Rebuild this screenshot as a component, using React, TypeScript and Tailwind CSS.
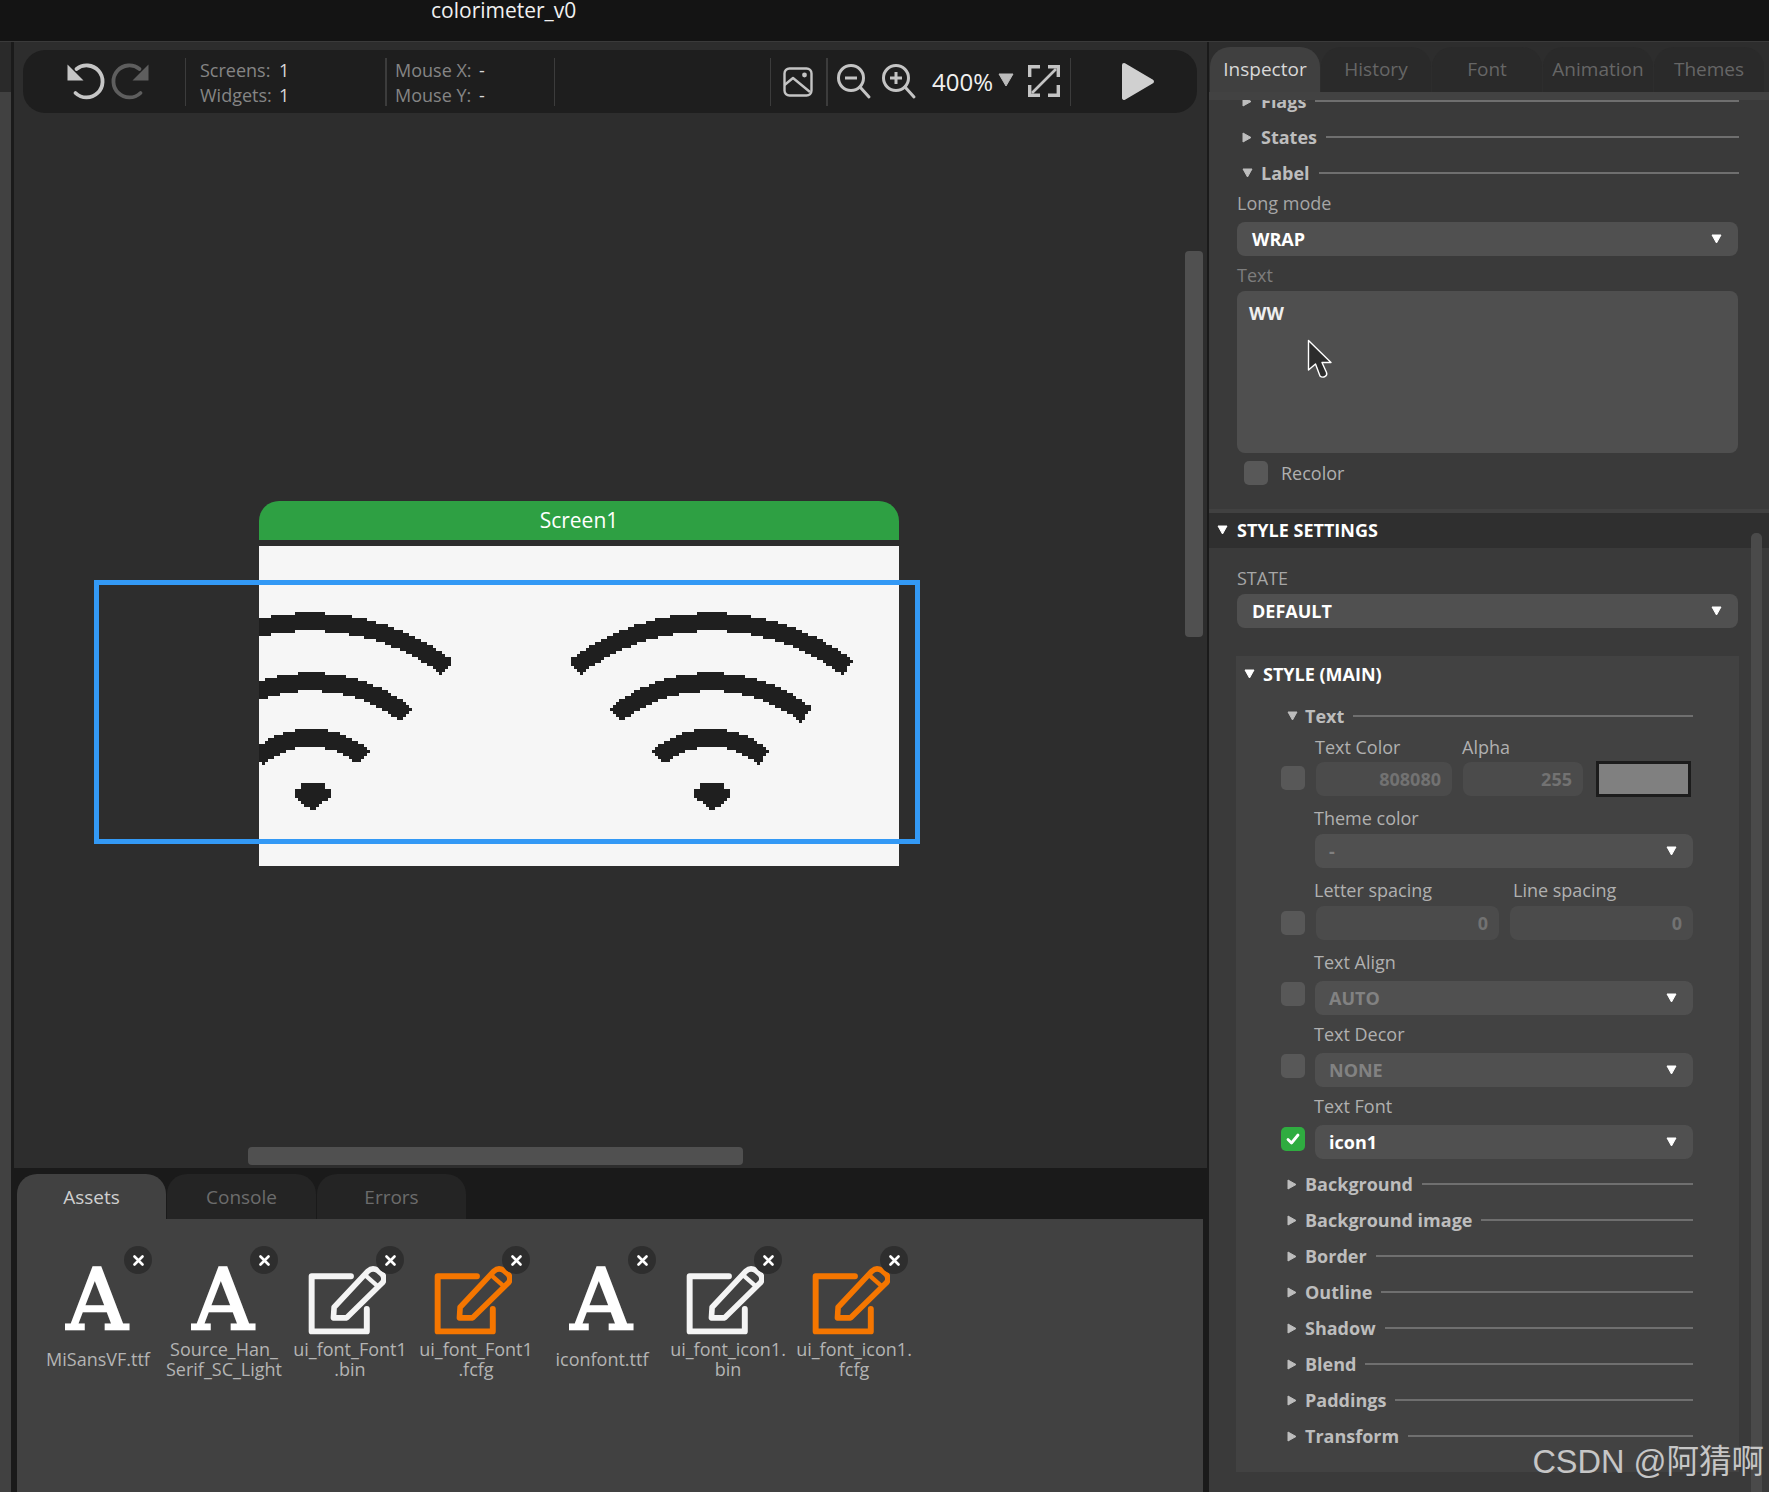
import React from "react";

const arcs = [
  { r: 227, cy: 849, a: 37 },
  { r: 155, cy: 837, a: 38 },
  { r: 81, cy: 819, a: 41 },
];
function inIcon(px: number, py: number, cx: number) {
  const dx = px - cx;
  for (const arc of arcs) {
    const dy = py - arc.cy;
    const d = Math.hypot(dx, dy);
    const ang = (Math.atan2(Math.abs(dx), -dy) * 180) / Math.PI;
    if (Math.abs(d - arc.r) <= 9 && ang <= arc.a) return true;
  }
  const ddx = Math.abs(dx - 1.5);
  if (py >= 784 && py <= 812) {
    let hw = py < 796 ? 18 : (18 * (812 - py)) / 16;
    if (py < 789) hw = 11;
    if (ddx <= hw) return true;
  }
  return false;
}
function wifiPath() {
  const cell = 3;
  let d = "";
  for (let j = 0; j < 107; j++) {
    for (let i = 0; i < 214; i++) {
      const px = 259 + i * cell + cell / 2;
      const py = 546 + j * cell + cell / 2;
      if (inIcon(px, py, 311) || inIcon(px, py, 711)) {
        d += `M${i * cell} ${j * cell}h${cell}v${cell}h-${cell}z`;
      }
    }
  }
  return d;
}
const WIFI = wifiPath();

function TriDown({ color = "#ffffff" }: { color?: string }) {
  return (
    <svg width="11" height="10" viewBox="0 0 11 10" className="shrink-0">
      <path d="M1 1 H10 L5.5 9 Z" fill={color} stroke={color} strokeWidth="1" strokeLinejoin="round" />
    </svg>
  );
}
function TriRight({ color = "#bdbdbd" }: { color?: string }) {
  return (
    <svg width="10" height="11" viewBox="0 0 10 11" className="shrink-0">
      <path d="M1 1 V10 L9 5.5 Z" fill={color} stroke={color} strokeWidth="1" strokeLinejoin="round" />
    </svg>
  );
}

function Row({ label, open, clsTri, clsText }: { label: string; open?: boolean; clsTri: string; clsText: string }) {
  return (
    <div className="flex items-center h-[36px]">
      <div className={clsTri}>{open ? <TriDown color="#bdbdbd" /> : <TriRight />}</div>
      <span className={clsText}>{label}</span>
      <div className="flex-1 h-[2px] bg-[#6f6f6f] ml-[9px]" />
    </div>
  );
}
function InspectorRow({ label, open }: { label: string; open?: boolean }) {
  return (
    <div className="ml-[33px] mr-[30px]">
      <Row label={label} open={open} clsTri="w-[19px]" clsText="text-[18px] font-bold text-[#bdbdbd] leading-[24px]" />
    </div>
  );
}
function StyleRow({ label, open }: { label: string; open?: boolean }) {
  return (
    <div className="ml-[51px] mr-[46px]">
      <Row label={label} open={open} clsTri="w-[18px]" clsText="text-[18px] font-bold text-[#bdbdbd] leading-[24px]" />
    </div>
  );
}

function Select({ value, cls, textCls }: { value: string; cls: string; textCls: string }) {
  return (
    <div className={`flex items-center justify-between h-[34px] rounded-[8px] bg-[#505050] pl-[14px] pr-[16px] ${cls}`}>
      <span className={`text-[18px] font-bold leading-[24px] ${textCls}`}>{value}</span>
      <TriDown />
    </div>
  );
}
function Check({ on, cls }: { on?: boolean; cls: string }) {
  return (
    <div className={`w-[24px] h-[24px] rounded-[5px] shrink-0 flex items-center justify-center ${on ? "bg-[#2fac40]" : "bg-[#585858]"} ${cls}`}>
      {on && (
        <svg width="14" height="12" viewBox="0 0 14 12">
          <path d="M2 6.5 L5.5 10 L12 2" fill="none" stroke="#ffffff" strokeWidth="2.8" strokeLinecap="round" strokeLinejoin="round" />
        </svg>
      )}
    </div>
  );
}
function Num({ value, cls }: { value: string; cls: string }) {
  return (
    <div className={`h-[34px] rounded-[8px] bg-[#4b4b4b] flex items-center justify-end pr-[11px] text-[18px] font-bold text-[#727272] ${cls}`}>
      {value}
    </div>
  );
}
function FLabel({ children, cls = "" }: { children: React.ReactNode; cls?: string }) {
  return <div className={`h-[26px] flex items-center text-[18px] leading-[24px] text-[#b0b0b0] ${cls}`}>{children}</div>;
}

function TopTab({ label, active }: { label: string; active?: boolean }) {
  return (
    <div
      className={`w-[110px] h-[45px] rounded-t-[20px] flex items-center justify-center text-[19px] ${
        active ? "bg-[#404040] text-[#d8d8d8]" : "bg-[#2a2a2a] text-[#666666]"
      }`}
    >
      {label}
    </div>
  );
}
function BottomTab({ label, active }: { label: string; active?: boolean }) {
  return (
    <div
      className={`w-[149px] h-[45px] pt-[1px] rounded-t-[20px] flex items-center justify-center text-[19px] ${
        active ? "bg-[#414141] text-[#cfcfcf]" : "bg-[#242424] text-[#6c6c6c]"
      }`}
    >
      {label}
    </div>
  );
}

function EditIcon({ color }: { color: string }) {
  return (
    <svg width="80" height="71" viewBox="20 62 240 215" className="blur-[0.6px]">
      <path d="M155 96 H36 V263 H203 V195" fill="none" stroke={color} strokeWidth="18" strokeLinejoin="round" strokeLinecap="round" />
      <path
        d="M102 222 L104 190 L207 80 Q220 68 236 78 L250 90 Q260 104 250 116 L142 222 Z"
        fill="none"
        stroke={color}
        strokeWidth="17"
        strokeLinejoin="round"
      />
      <path d="M197 92 L240 130" fill="none" stroke={color} strokeWidth="13" />
    </svg>
  );
}

function Asset({ icon, lines }: { icon: "font" | "white" | "orange"; lines: string[] }) {
  return (
    <div className="relative w-[126px] shrink-0 flex flex-col items-center">
      <div className="absolute left-[89px] top-0 w-[28px] h-[28px] rounded-full bg-[#2e2e2e] flex items-center justify-center z-10">
        <svg width="11" height="11" viewBox="0 0 11 11">
          <path d="M1.5 1.5 L9.5 9.5 M9.5 1.5 L1.5 9.5" stroke="#ffffff" strokeWidth="2.6" strokeLinecap="round" />
        </svg>
      </div>
      <div className="mt-[20px] h-[68px] w-full flex items-center justify-center">
        {icon === "font" ? (
          <span className="-ml-[2px] text-[84px] leading-[68px] font-normal text-white blur-[0.5px] [-webkit-text-stroke:2.5px_#ffffff] [font-family:'DejaVu_Serif',serif]">
            A
          </span>
        ) : (
          <div className="-ml-[8px]">
            <EditIcon color={icon === "white" ? "#f4f4f4" : "#f57600"} />
          </div>
        )}
      </div>
      <div className="mt-[5px] h-[40px] flex flex-col justify-center items-center text-[18px] leading-[20px] text-[#b4b4b4] whitespace-nowrap">
        {lines.map((l) => (
          <div key={l}>{l}</div>
        ))}
      </div>
    </div>
  );
}

function Toolbar() {
  return (
    <div className="ml-[9px] mt-[8px] w-[1174px] h-[63px] rounded-[22px] bg-[#1e1e1e] flex items-center relative z-10">
      <div className="w-[162px] h-[48px] flex items-center pl-[37px]">
        <svg width="100" height="50" viewBox="0 0 100 50">
          <path d="M16.5 12 A16 16 0 1 1 15.5 36" fill="none" stroke="#c6c6c6" strokeWidth="3.8" strokeLinecap="round" />
          <path d="M7.5 7.5 V23.5 H23.5 Z" fill="#c6c6c6" />
          <path d="M79.5 12 A16 16 0 1 0 80.5 36" fill="none" stroke="#5e5e5e" strokeWidth="3.8" strokeLinecap="round" />
          <path d="M88.5 7.5 V23.5 H72.5 Z" fill="#5e5e5e" />
        </svg>
      </div>
      <div className="w-[200px] h-[48px] border-l border-[#3c3c3c] pl-[14px] flex flex-col text-[18px] leading-[25px] text-[#858585]">
        <div className="flex">
          <span className="w-[79px]">Screens:</span>
          <span className="text-[#d8d8d8]">1</span>
        </div>
        <div className="flex">
          <span className="w-[79px]">Widgets:</span>
          <span className="text-[#d8d8d8]">1</span>
        </div>
      </div>
      <div className="w-[169px] h-[48px] border-l-2 border-[#3c3c3c] pl-[8px] flex flex-col text-[18px] leading-[25px] text-[#858585]">
        <div className="flex">
          <span className="w-[84px]">Mouse X:</span>
          <span className="text-[#d8d8d8]">-</span>
        </div>
        <div className="flex">
          <span className="w-[84px]">Mouse Y:</span>
          <span className="text-[#d8d8d8]">-</span>
        </div>
      </div>
      <div className="w-[216px] h-[48px] border-l border-[#3c3c3c]" />
      <div className="w-[56px] h-[48px] border-l border-[#3c3c3c] flex items-center pl-[12px]">
        <svg width="30" height="30" viewBox="0 0 30 30" fill="none" stroke="#c4c4c4" strokeWidth="2.4">
          <rect x="1.5" y="1.5" width="27" height="27" rx="5" />
          <path d="M1.5 18 L10 11 L27 25" strokeLinejoin="round" />
          <circle cx="21.5" cy="8" r="2.4" fill="#c4c4c4" stroke="none" />
        </svg>
      </div>
      <div className="w-[244px] h-[48px] border-l-2 border-[#3c3c3c] flex items-center">
        <svg width="82" height="36" viewBox="0 0 82 36" fill="none" stroke="#c4c4c4" strokeWidth="3" className="ml-[8px] shrink-0">
          <circle cx="15" cy="14" r="12.5" />
          <path d="M24 23 L33 33" strokeLinecap="round" />
          <path d="M9 14 H21" />
          <circle cx="60" cy="14" r="12.5" />
          <path d="M69 23 L78 33" strokeLinecap="round" />
          <path d="M54 14 H66 M60 8 V20" />
        </svg>
        <span className="ml-[14px] text-[24px] leading-[30px] text-[#f0f0f0]">400%</span>
        <div className="ml-[5px] mb-[4px]">
          <svg width="16" height="14" viewBox="0 0 16 14">
            <path d="M1 1 H15 L8 13 Z" fill="#bcbcbc" stroke="#bcbcbc" strokeLinejoin="round" />
          </svg>
        </div>
        <svg width="32" height="32" viewBox="0 0 32 32" fill="none" stroke="#c4c4c4" strokeWidth="3.4" className="ml-[14px] mb-[2px] shrink-0">
          <path d="M1.7 12 V1.7 H12 M20 1.7 H30.3 V12 M30.3 20 V30.3 H20 M12 30.3 H1.7 V20" />
          <path d="M28 4 L4 28" strokeWidth="2.6" />
        </svg>
      </div>
      <div className="h-[48px] border-l border-[#3c3c3c] pl-[50px] flex items-center">
        <svg width="34" height="39" viewBox="0 0 34 39">
          <path d="M3 3 L31 19.5 L3 36 Z" fill="#d0d0d0" stroke="#d0d0d0" strokeWidth="4" strokeLinejoin="round" />
        </svg>
      </div>
    </div>
  );
}

function Canvas() {
  return (
    <div className="relative h-[1126px] bg-[#2d2d2d] overflow-hidden">
      <Toolbar />
      <div className="absolute left-[245px] top-[459px] w-[640px] h-[39px] rounded-t-[20px] bg-[#2ea043] flex items-center justify-center text-[21px] text-white">
        Screen1
      </div>
      <div className="absolute left-[245px] top-[504px] w-[640px] h-[320px] bg-[#f6f6f6] overflow-hidden">
        <svg width="640" height="320" viewBox="0 0 640 320" shapeRendering="crispEdges" className="block blur-[0.6px]">
          <path d={WIFI} fill="#1f1f1f" />
        </svg>
      </div>
      <div className="absolute left-[80px] top-[538px] w-[826px] h-[264px] border-[5px] border-[#3399f5]" />
      <div className="absolute left-[1171px] top-[209px] w-[18px] h-[386px] rounded-[4px] bg-[#505050]" />
      <div className="absolute left-[234px] top-[1105px] w-[495px] h-[18px] rounded-[4px] bg-[#505050]" />
    </div>
  );
}

function Bottom() {
  const items: { icon: "font" | "white" | "orange"; lines: string[] }[] = [
    { icon: "font", lines: ["MiSansVF.ttf"] },
    { icon: "font", lines: ["Source_Han_", "Serif_SC_Light"] },
    { icon: "white", lines: ["ui_font_Font1", ".bin"] },
    { icon: "orange", lines: ["ui_font_Font1", ".fcfg"] },
    { icon: "font", lines: ["iconfont.ttf"] },
    { icon: "white", lines: ["ui_font_icon1.", "bin"] },
    { icon: "orange", lines: ["ui_font_icon1.", "fcfg"] },
  ];
  return (
    <div className="flex-1 flex flex-col bg-[#1a1a1a] pl-[3px] pr-[4px]">
      <div className="h-[51px] flex items-end gap-[1px]">
        <BottomTab label="Assets" active />
        <BottomTab label="Console" />
        <BottomTab label="Errors" />
      </div>
      <div className="flex-1 bg-[#414141] flex items-start pl-[18px] pt-[27px]">
        {items.map((it, i) => (
          <Asset key={i} icon={it.icon} lines={it.lines} />
        ))}
      </div>
    </div>
  );
}

function Inspector() {
  return (
    <div className="flex-1 flex flex-col min-w-0">
      <div className="h-[50px] bg-[#2d2d2d] flex items-end gap-[1px] pl-[1px] shrink-0">
        <TopTab label="Inspector" active />
        <TopTab label="History" />
        <TopTab label="Font" />
        <TopTab label="Animation" />
        <TopTab label="Themes" />
      </div>
      <div className="h-[8px] bg-[#424242] shrink-0 relative z-10" />
      <div className="relative flex-1 bg-[#3a3a3a] overflow-hidden">
        <div className="absolute left-[542px] top-[433px] w-[11px] h-[1000px] rounded-[5px] bg-[#4a4a4a]" />
        <div className="-mt-[17px]">
          <InspectorRow label="Flags" />
          <InspectorRow label="States" />
          <InspectorRow label="Label" open />
          <FLabel cls="ml-[28px] pb-[2px] !text-[#a6a6a6]">Long mode</FLabel>
          <Select value="WRAP" cls="ml-[28px] w-[501px] mt-[5px] !pl-[15px]" textCls="text-white" />
          <FLabel cls="ml-[28px] mt-[6px] !text-[#7d7d7d]">Text</FLabel>
          <div className="relative ml-[28px] w-[501px] h-[162px] mt-[3px] rounded-[8px] bg-[#4f4f4f] pl-[12px] pt-[10px] text-[18px] leading-[24px] font-bold text-[#eeeeee]">
            WW
            <svg width="26" height="40" viewBox="0 0 26 40" className="absolute left-[70px] top-[48px]">
              <path
                d="M1.5 1.5 V31 L8.5 25 L13 37 Q15 39 18 37.5 Q20.5 36 19.5 33.5 L15 23.5 H24 Z"
                fill="#2c2c2c"
                stroke="#ffffff"
                strokeWidth="1.4"
                strokeLinejoin="round"
              />
            </svg>
          </div>
          <div className="ml-[35px] mt-[8px] flex items-center h-[24px]">
            <Check cls="" />
            <span className="ml-[13px] text-[18px] leading-[24px] text-[#b0b0b0]">Recolor</span>
          </div>
          <div className="mt-[24px] border-t-[4px] border-[#414141] h-[39px] pb-[2px] bg-[#2f2f2f] flex items-center pl-[8px]">
            <div className="w-[20px]">
              <TriDown />
            </div>
            <span className="text-[18px] font-bold leading-[24px] text-white">STYLE SETTINGS</span>
          </div>
          <FLabel cls="ml-[28px] mt-[17px] !text-[#a6a6a6]">STATE</FLabel>
          <Select value="DEFAULT" cls="ml-[28px] w-[501px] mt-[3px] !pl-[15px]" textCls="text-white" />
          <div className="ml-[27px] w-[503px] h-[816px] mt-[28px] bg-[#424242]">
            <div className="h-[38px] pb-[2px] flex items-center pl-[8px]">
              <div className="w-[19px]">
                <TriDown />
              </div>
              <span className="text-[18px] font-bold leading-[24px] text-white">STYLE (MAIN)</span>
            </div>
            <div className="mt-[4px]">
              <StyleRow label="Text" open />
            </div>
            <div className="ml-[79px] flex">
              <FLabel cls="w-[147px]">Text Color</FLabel>
              <FLabel>Alpha</FLabel>
            </div>
            <div className="mt-[2px] ml-[45px] flex items-start">
              <Check cls="mt-[4px]" />
              <Num value="808080" cls="ml-[11px] w-[136px]" />
              <Num value="255" cls="ml-[11px] w-[120px]" />
              <div className="ml-[13px] -mt-[1px] w-[95px] h-[36px] border-[3px] border-[#1c1c1c] bg-[#808080]" />
            </div>
            <FLabel cls="ml-[78px] mt-[9px] pb-[2px]">Theme color</FLabel>
            <Select value="-" cls="ml-[79px] w-[378px] mt-[2px]" textCls="text-[#808080]" />
            <div className="ml-[78px] mt-[10px] flex">
              <FLabel cls="w-[199px] pb-[2px]">Letter spacing</FLabel>
              <FLabel cls="pb-[2px]">Line spacing</FLabel>
            </div>
            <div className="mt-[2px] ml-[45px] flex items-start">
              <Check cls="mt-[5px]" />
              <Num value="0" cls="ml-[11px] w-[183px]" />
              <Num value="0" cls="ml-[11px] w-[183px]" />
            </div>
            <FLabel cls="ml-[78px] mt-[10px] pb-[2px]">Text Align</FLabel>
            <div className="mt-[5px] ml-[45px] flex items-start">
              <Check cls="mt-[1px]" />
              <Select value="AUTO" cls="ml-[10px] w-[378px]" textCls="text-[#828282]" />
            </div>
            <FLabel cls="ml-[78px] mt-[7px] pb-[2px]">Text Decor</FLabel>
            <div className="mt-[5px] ml-[45px] flex items-start">
              <Check cls="mt-[1px]" />
              <Select value="NONE" cls="ml-[10px] w-[378px]" textCls="text-[#828282]" />
            </div>
            <FLabel cls="ml-[78px] mt-[7px] pb-[2px]">Text Font</FLabel>
            <div className="mt-[5px] ml-[45px] flex items-start">
              <Check on cls="mt-[2px]" />
              <Select value="icon1" cls="ml-[10px] w-[378px]" textCls="text-white" />
            </div>
            <div className="mt-[7px]">
              {["Background", "Background image", "Border", "Outline", "Shadow", "Blend", "Paddings", "Transform"].map((l) => (
                <StyleRow key={l} label={l} />
              ))}
            </div>
          </div>
        </div>
      </div>
    </div>
  );
}

export default function App() {
  return (
    <div className="relative w-[1769px] h-[1492px] overflow-hidden bg-[#141414] flex flex-col [font-family:'Open_Sans',sans-serif]">
      <div className="h-[42px] shrink-0 border-b border-[#3a3a3a] pl-[431px] text-[21px] leading-[20px] text-[#f0f0f0]">colorimeter_v0</div>
      <div className="flex flex-1 min-h-0">
        <div className="w-[11px] flex flex-col shrink-0">
          <div className="h-[50px] bg-[#2a2a2a]" />
          <div className="flex-1 bg-[#414141]" />
        </div>
        <div className="w-[3px] bg-[#1a1a1a] shrink-0" />
        <div className="w-[1193px] flex flex-col shrink-0">
          <Canvas />
          <Bottom />
        </div>
        <div className="w-[2px] bg-[#1a1a1a] shrink-0" />
        <Inspector />
      </div>
      <div className="absolute right-[5px] top-[1440px] text-[32.5px] leading-[44px] text-[#c6c6c6] whitespace-nowrap [font-family:'Liberation_Sans','Noto_Sans_CJK_SC',sans-serif]">
        CSDN @阿猜啊
      </div>
    </div>
  );
}
